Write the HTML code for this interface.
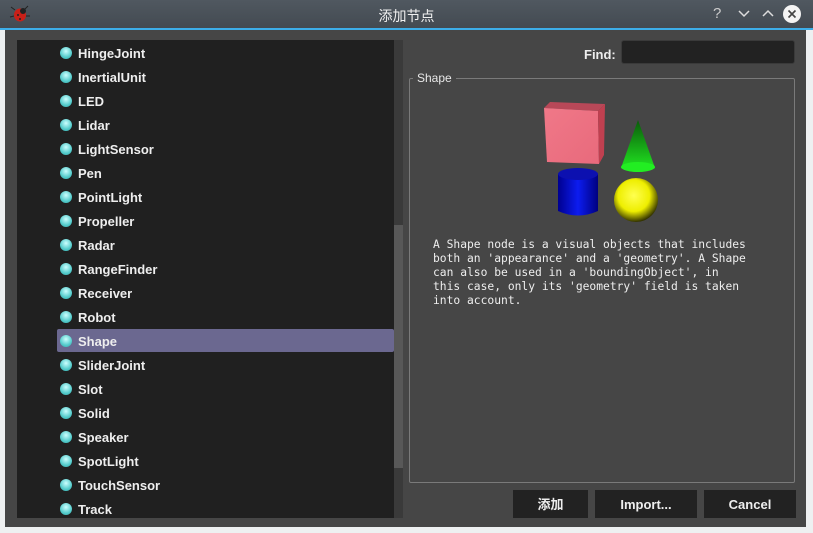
<!DOCTYPE html>
<html><head><meta charset="utf-8"><style>
*{margin:0;padding:0;box-sizing:border-box}
body{width:813px;height:533px;overflow:hidden;background:#eef0f1;position:relative;font-family:"Liberation Sans","Noto Sans CJK SC",sans-serif}
.tb{position:absolute;left:0;top:0;width:813px;height:29px;background:linear-gradient(#505860,#434a51);color:#eef;}
.tb .t{position:absolute;left:0;width:813px;top:6px;text-align:center;font-size:14px;color:#f0f0f0}
.line{position:absolute;left:0;top:28px;width:813px;height:2px;background:#3daee9}
.win{position:absolute;left:5px;top:30px;width:801px;height:497px;background:#464646}
.list{position:absolute;left:17px;top:40px;width:377px;height:478px;background:#202020;overflow:hidden}
.sb{position:absolute;left:394px;top:40px;width:9px;height:478px;background:#3a3a3a}
.thumb{position:absolute;left:394px;top:225px;width:9px;height:243px;background:#585858}
.it{position:absolute;left:40px;height:23px;width:337px;color:#eee;font-size:13px;font-weight:bold;line-height:25px}
.it i{position:absolute;left:3px;top:6px;width:12px;height:12px;border-radius:50%;background:radial-gradient(circle at 50% 35%,#cff,#5cc 60%,#3aa)}
.it span{position:absolute;left:21px}
.sel{background:#6b6890;border-radius:2px}
.find{position:absolute;left:584px;top:47px;color:#eee;font-size:13px;font-weight:bold}
.inp{position:absolute;left:621px;top:40px;width:174px;height:24px;background:#222;border:1px solid #3a3a3a;border-radius:3px}
.gb{position:absolute;left:409px;top:78px;width:386px;height:405px;border:1px solid #7a7a7a;border-radius:2px}
.gl{position:absolute;left:413px;top:71px;background:#464646;color:#e8e8e8;font-size:12px;padding:0 4px}
.desc{position:absolute;left:433px;top:238px;font-family:"DejaVu Sans Mono",monospace;font-size:11.3px;line-height:14px;color:#eee;white-space:pre}
.btn{position:absolute;top:490px;height:28px;background:#222;color:#eee;font-size:13px;font-weight:bold;text-align:center;line-height:30px}
</style></head><body>
<div class="tb">
<svg style="position:absolute;left:9px;top:4px" width="22" height="20" viewBox="0 0 22 20"><g stroke="#222" stroke-width="1"><line x1="6" y1="6" x2="2" y2="3"/><line x1="15" y1="6" x2="19" y2="2"/><line x1="5" y1="12" x2="1" y2="13"/><line x1="17" y1="12" x2="21" y2="12"/></g><ellipse cx="11" cy="11" rx="6" ry="6.5" fill="#c82018"/><circle cx="14" cy="7" r="3" fill="#222"/><circle cx="9" cy="11" r="1" fill="#222"/><circle cx="11" cy="15" r="1" fill="#222"/></svg>
<div class="t">添加节点</div>
<div style="position:absolute;left:713px;top:5px;font-size:15px;color:#ccc">?</div>
<svg style="position:absolute;left:737px;top:9px" width="14" height="10"><path d="M2 2 L7 7 L12 2" stroke="#ddd" stroke-width="1.5" fill="none"/></svg>
<svg style="position:absolute;left:761px;top:8px" width="14" height="10"><path d="M2 8 L7 3 L12 8" stroke="#ddd" stroke-width="1.5" fill="none"/></svg>
<svg style="position:absolute;left:782px;top:4px" width="20" height="20"><circle cx="10" cy="10" r="9" fill="#f4f4f4"/><path d="M6.5 6.5 L13.5 13.5 M13.5 6.5 L6.5 13.5" stroke="#444" stroke-width="1.6"/></svg>
</div>
<div class="line"></div>
<div class="win"></div>
<div class="list">
<div class="it" style="top:1px"><i></i><span>HingeJoint</span></div>
<div class="it" style="top:25px"><i></i><span>InertialUnit</span></div>
<div class="it" style="top:49px"><i></i><span>LED</span></div>
<div class="it" style="top:73px"><i></i><span>Lidar</span></div>
<div class="it" style="top:97px"><i></i><span>LightSensor</span></div>
<div class="it" style="top:121px"><i></i><span>Pen</span></div>
<div class="it" style="top:145px"><i></i><span>PointLight</span></div>
<div class="it" style="top:169px"><i></i><span>Propeller</span></div>
<div class="it" style="top:193px"><i></i><span>Radar</span></div>
<div class="it" style="top:217px"><i></i><span>RangeFinder</span></div>
<div class="it" style="top:241px"><i></i><span>Receiver</span></div>
<div class="it" style="top:265px"><i></i><span>Robot</span></div>
<div class="it sel" style="top:289px"><i></i><span>Shape</span></div>
<div class="it" style="top:313px"><i></i><span>SliderJoint</span></div>
<div class="it" style="top:337px"><i></i><span>Slot</span></div>
<div class="it" style="top:361px"><i></i><span>Solid</span></div>
<div class="it" style="top:385px"><i></i><span>Speaker</span></div>
<div class="it" style="top:409px"><i></i><span>SpotLight</span></div>
<div class="it" style="top:433px"><i></i><span>TouchSensor</span></div>
<div class="it" style="top:457px"><i></i><span>Track</span></div>
</div>
<div class="sb"></div><div class="thumb"></div>
<div class="find">Find:</div><div class="inp"></div>
<div class="gb"></div><div class="gl">Shape</div>
<svg style="position:absolute;left:540px;top:100px" width="125" height="125" viewBox="0 0 125 125">
<defs>
<linearGradient id="cf" x1="0" y1="0" x2="1" y2="1"><stop offset="0" stop-color="#f07888"/><stop offset="1" stop-color="#e86a7c"/></linearGradient>
<linearGradient id="cn" x1="0" y1="0" x2="0" y2="1"><stop offset="0" stop-color="#0a5a0a"/><stop offset="1" stop-color="#22ee22"/></linearGradient>
<linearGradient id="cy" x1="0" y1="0" x2="1" y2="0"><stop offset="0" stop-color="#000090"/><stop offset=".5" stop-color="#0c1cf0"/><stop offset="1" stop-color="#000080"/></linearGradient>
<radialGradient id="sp" cx=".45" cy=".4" r=".6"><stop offset="0" stop-color="#ffff50"/><stop offset=".6" stop-color="#eeee00"/><stop offset="1" stop-color="#333300"/></radialGradient>
</defs>
<polygon points="4,8 10,2 65,4 58,11" fill="#b84858"/>
<polygon points="4,8 58,11 59,64 7,62" fill="url(#cf)"/>
<polygon points="58,11 65,4 64,55 59,64" fill="#c04050"/>
<path d="M98 20 L115 68 Q98 76 81 68 Z" fill="url(#cn)"/>
<ellipse cx="98" cy="67" rx="17" ry="5" fill="#22ee22"/>
<path d="M18 74 L58 74 L58 111 Q38 120 18 111 Z" fill="url(#cy)"/>
<ellipse cx="38" cy="74" rx="20" ry="6" fill="#0c10b0"/>
<circle cx="96" cy="100" r="22" fill="url(#sp)"/>
</svg>
<div class="desc">A Shape node is a visual objects that includes
both an 'appearance' and a 'geometry'. A Shape
can also be used in a 'boundingObject', in
this case, only its 'geometry' field is taken
into account.</div>
<div class="btn" style="left:513px;width:75px">添加</div>
<div class="btn" style="left:595px;width:102px">Import...</div>
<div class="btn" style="left:704px;width:92px">Cancel</div>
</body></html>
